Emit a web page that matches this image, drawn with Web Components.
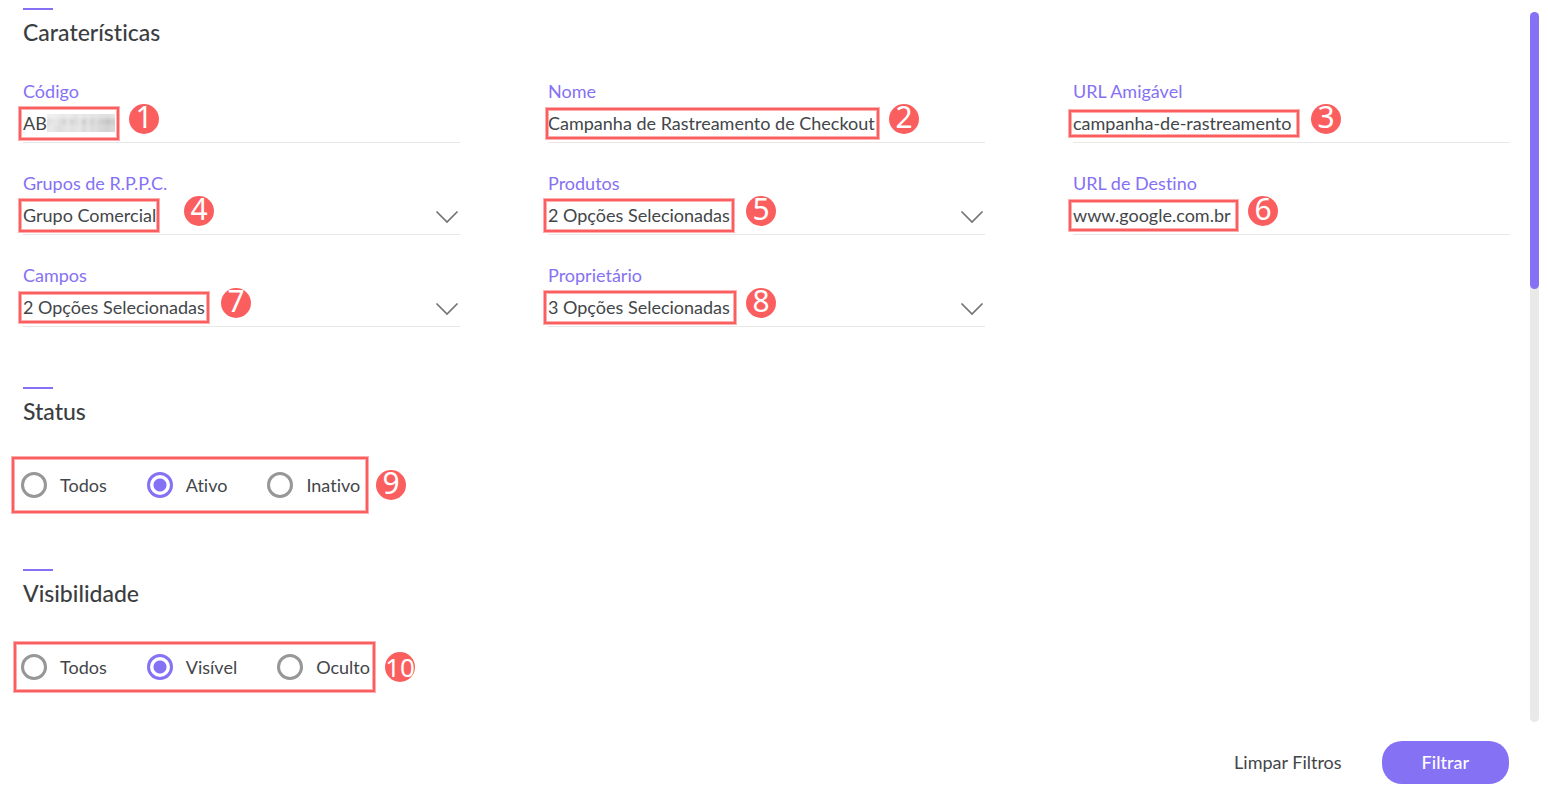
<!DOCTYPE html>
<html lang="pt-BR">
<head>
<meta charset="utf-8">
<meta name="viewport" content="width=device-width, initial-scale=1">
<title>Filtros</title>
<style>
  body {
    margin: 0;
    background: #fff;
    color: #434649;
    font: 18px/24px Lato, "Open Sans", sans-serif;
    font-variant-ligatures: none;
    --accent: #8571f4;
    --note: #fb5e5e;
    --note-soft: #fdafaf;
    --rule: #e8e8e8;
  }
</style>
</head>
<body>
<filter-panel>
  <filter-section heading="Caraterísticas">
    <field-grid>
      <filter-field label="Código" value="AB" masked><note-mark slot="note" number="1" style="--w:100px;--h:33px"></note-mark></filter-field>
      <filter-field label="Nome" value="Campanha de Rastreamento de Checkout"><note-mark slot="note" number="2" style="--x:-2px;--w:333px;--h:31px"></note-mark></filter-field>
      <filter-field label="URL Amigável" value="campanha-de-rastreamento"><note-mark slot="note" number="3" style="--w:230px;--h:27px;--gap:12px"></note-mark></filter-field>
      <filter-field kind="select" label="Grupos de R.P.P.C." value="Grupo Comercial"><note-mark slot="note" number="4" style="--w:140px;--h:33px;--gap:25px"></note-mark></filter-field>
      <filter-field kind="select" label="Produtos" value="2 Opções Selecionadas"><note-mark slot="note" number="5" style="--w:190px;--h:33px;--gap:12px"></note-mark></filter-field>
      <filter-field label="URL de Destino" value="www.google.com.br"><note-mark slot="note" number="6" style="--w:169px;--h:31px"></note-mark></filter-field>
      <filter-field kind="select" label="Campos" value="2 Opções Selecionadas"><note-mark slot="note" number="7" style="--w:190px;--h:31px;--gap:12px"></note-mark></filter-field>
      <filter-field kind="select" label="Proprietário" value="3 Opções Selecionadas"><note-mark slot="note" number="8" style="--w:192px;--h:33px"></note-mark></filter-field>
    </field-grid>
  </filter-section>
  <filter-section heading="Status">
    <radio-group name="status" options="Todos,Ativo,Inativo" selected="Ativo"><note-mark slot="note" number="9" style="--w:356px;--h:56px;--gap:8px"></note-mark></radio-group>
  </filter-section>
  <filter-section heading="Visibilidade">
    <radio-group name="visibilidade" options="Todos,Visível,Oculto" selected="Visível"><note-mark slot="note" number="10" style="--x:-7px;--w:361px;--h:50px"></note-mark></radio-group>
  </filter-section>
  <action-button slot="actions" kind="plain">Limpar Filtros</action-button>
  <action-button slot="actions" kind="primary">Filtrar</action-button>
</filter-panel>

<script>
class FilterPanel extends HTMLElement {
  constructor() {
    super();
    this.attachShadow({ mode: 'open' }).innerHTML = `
      <style>
        :host { display: flex; flex-direction: column; min-height: 100vh; }
        .body { flex: 1; display: flex; gap: 20px; padding-right: 9px; }
        main { flex: 1; min-width: 0; padding: 8px 0 0 23px; }
        .track { width: 9px; margin-top: 12px; border-radius: 5px; background: #e9e9e9; }
        .thumb { width: 9px; height: 39%; border-radius: 5px; background: var(--accent); }
        footer { display: flex; justify-content: flex-end; align-items: center; gap: 40px; padding: 19px 39px 13px; }
      </style>
      <div class="body"><main><slot></slot></main><div class="track"><div class="thumb"></div></div></div>
      <footer><slot name="actions"></slot></footer>`;
  }
}

class FilterSection extends HTMLElement {
  connectedCallback() {
    this.attachShadow({ mode: 'open' }).innerHTML = `
      <style>
        :host { display: block; }
        :host(:not(:first-child)) { margin-top: 58px; }
        h2 { margin: 0 0 34px; font: 500 23px/28px Lato, sans-serif; font-variant-ligatures: none; color: #3b3e41; }
        h2::before { content: ""; display: block; width: 30px; height: 2px; margin-bottom: 8px; background: var(--accent); }
      </style>
      <h2>${this.getAttribute('heading')}</h2><slot></slot>`;
  }
}

class FieldGrid extends HTMLElement {
  constructor() {
    super();
    this.attachShadow({ mode: 'open' }).innerHTML = `
      <style>
        :host { display: grid; grid-template-columns: repeat(3, minmax(0, 1fr)); gap: 29px 88px; padding-bottom: 2px; }
      </style><slot></slot>`;
  }
}

class FilterField extends HTMLElement {
  connectedCallback() {
    const value = this.getAttribute('value');
    const isSelect = this.getAttribute('kind') === 'select';
    const control = isSelect
      ? `<select id="control"><option>${value}</option></select>
         <svg width="24" height="14" viewBox="0 0 24 14" aria-hidden="true"><path d="M1.5 1.5 12 12 22.5 1.5" fill="none" stroke="#747474" stroke-width="1.7"/></svg>`
      : `<input id="control" type="text" value="${value}">`;
    this.attachShadow({ mode: 'open' }).innerHTML = `
      <style>
        :host { display: block; }
        label { display: block; line-height: 22px; margin-bottom: 2px; color: var(--accent); }
        .row { position: relative; display: flex; align-items: center; height: 38px; border-bottom: 1px solid var(--rule); }
        input, select { flex: 1; min-width: 0; margin: 0; padding: 0; border: 0; outline: 0; background: none; appearance: none; font: inherit; color: inherit; }
        svg { position: absolute; right: 1px; top: 14px; pointer-events: none; }
        .mask { position: absolute; left: 24px; top: 10px; display: grid; grid-template-columns: repeat(17, 4px); grid-auto-rows: 6px; overflow: hidden; }
        .mask i { box-shadow: 0 0 3px 1px var(--c); background: var(--c); }
      </style>
      <label for="control">${this.getAttribute('label')}</label>
      <div class="row">${control}${this.hasAttribute('masked') ? this.mask() : ''}<slot name="note"></slot></div>`;
  }
  mask() {
    const rows = [
      [238, 240, 238, 234, 232, 236, 232, 228, 234, 228, 232, 228, 230, 224, 226, 222, 228],
      [222, 228, 232, 222, 214, 226, 214, 220, 228, 208, 224, 212, 220, 210, 204, 198, 206],
      [230, 232, 226, 222, 226, 230, 224, 228, 230, 218, 228, 220, 222, 216, 214, 210, 216]
    ];
    const cells = rows.flat().map(v => `<i style="--c:rgb(${v},${v},${v})"></i>`).join('');
    return `<div class="mask" aria-hidden="true">${cells}</div>`;
  }
}

class RadioGroup extends HTMLElement {
  connectedCallback() {
    const name = this.getAttribute('name');
    const selected = this.getAttribute('selected');
    const items = this.getAttribute('options').split(',').map(text =>
      `<label><input type="radio" name="${name}"${text === selected ? ' checked' : ''}><span>${text}</span></label>`).join('');
    this.attachShadow({ mode: 'open' }).innerHTML = `
      <style>
        :host { position: relative; display: flex; gap: 40px; margin-left: -2px; padding: 13px 0; --x: -9px; --drop: 11px; }
        label { display: flex; align-items: center; gap: 13px; }
        input { appearance: none; box-sizing: border-box; width: 26px; height: 26px; margin: 0; border: 3px solid #979797; border-radius: 50%; }
        input:checked { border-color: var(--accent); background: radial-gradient(circle, var(--accent) 6px, transparent 7px); }
      </style>${items}<slot name="note"></slot>`;
  }
}

class NoteMark extends HTMLElement {
  connectedCallback() {
    const number = this.getAttribute('number');
    this.attachShadow({ mode: 'open' }).innerHTML = `
      <style>
        :host { position: absolute; left: var(--x, -4px); top: 0; bottom: 0; display: flex; align-items: center; gap: var(--gap, 10px); pointer-events: none; }
        .box { box-sizing: border-box; width: var(--w); height: var(--h); border: 2px solid var(--note); box-shadow: 0 0 0 1px var(--note-soft), inset 0 0 0 1px var(--note-soft); }
        .badge { align-self: flex-start; margin-top: var(--drop, 0); width: 30px; height: 30px; border-radius: 50%; background: var(--note); color: #fff; display: flex; justify-content: center; font: 30px/26px "Noto Sans", sans-serif; }
        .wide { font-size: 26px; line-height: 30px; }
      </style>
      <div class="box"></div><div class="badge${number.length > 1 ? ' wide' : ''}">${number}</div>`;
  }
}

class ActionButton extends HTMLElement {
  constructor() {
    super();
    this.attachShadow({ mode: 'open' }).innerHTML = `
      <style>
        :host { display: block; }
        button { display: block; margin: 0; padding: 0 0 2px; border: 0; background: none; font: inherit; line-height: 22px; color: inherit; cursor: pointer; }
        :host([kind="primary"]) button { padding: 0 40px 2px; height: 43px; border-radius: 20px; background: var(--accent); color: #fff; font-weight: 500; }
      </style>
      <button type="button"><slot></slot></button>`;
  }
}

customElements.define('filter-panel', FilterPanel);
customElements.define('filter-section', FilterSection);
customElements.define('field-grid', FieldGrid);
customElements.define('filter-field', FilterField);
customElements.define('radio-group', RadioGroup);
customElements.define('note-mark', NoteMark);
customElements.define('action-button', ActionButton);
</script>
</body>
</html>
